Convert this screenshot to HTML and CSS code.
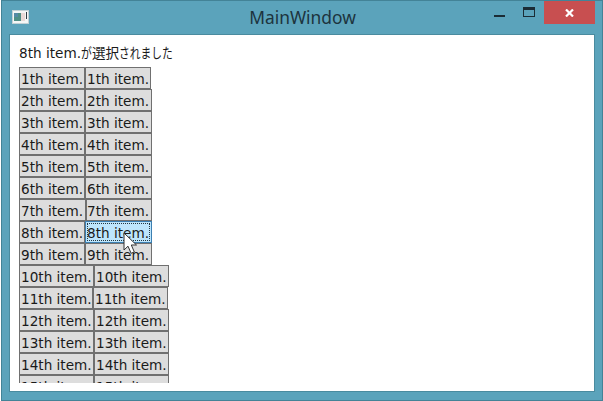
FILE: index.html
```html
<!DOCTYPE html>
<html lang="ja">
<head>
<meta charset="utf-8">
<title>MainWindow</title>
<link rel="stylesheet" href="styles.css">
</head>
<body>
<div class="window">
  <header class="titlebar">
    <svg class="app-icon" width="17" height="14" viewBox="0 0 17 14">
      <rect x=".5" y=".5" width="16" height="13" fill="#f4f6f6" stroke="#c3d0d4"/>
      <rect x="2" y="3" width="7" height="8" fill="#4f8f86"/>
      <path d="M2 3h4v4H2z" fill="#568aa5"/>
      <rect x="9" y="3" width="4" height="8" fill="#ead9d6"/>
      <rect x="14" y="2" width="1" height="7" fill="#303b43"/>
    </svg>
    <h1 class="title">MainWindow</h1>
    <div class="controls">
      <svg class="minimize" width="12" height="3" viewBox="0 0 12 3"><path d="M0 0h11v2H0z" fill="#1b2c35"/></svg>
      <svg class="maximize" width="12" height="10" viewBox="0 0 12 10"><path fill-rule="evenodd" d="M0 0h12v10H0zM1 3v6h10V3z" fill="#1b2c35"/></svg>
      <div class="close"><svg width="9" height="8" viewBox="0 0 9 8"><path d="M1 .5 8 7.5M8 .5 1 7.5" stroke="#fff" stroke-width="2.2"/></svg></div>
    </div>
  </header>
  <main class="client">
    <p class="message"><span class="latin">8th item.</span><span class="kana lead">が</span><span class="kanji">選択</span><span class="kana">されました</span></p>
    <div class="list">
      <div class="row first"><span class="cell">1th item.</span><span class="cell">1th item.</span></div>
      <div class="row"><span class="cell">2th item.</span><span class="cell">2th item.</span></div>
      <div class="row"><span class="cell">3th item.</span><span class="cell">3th item.</span></div>
      <div class="row"><span class="cell">4th item.</span><span class="cell">4th item.</span></div>
      <div class="row"><span class="cell">5th item.</span><span class="cell">5th item.</span></div>
      <div class="row"><span class="cell">6th item.</span><span class="cell">6th item.</span></div>
      <div class="row seventh"><span class="cell">7th item.</span><span class="cell">7th item.</span></div>
      <div class="row"><span class="cell">8th item.</span><span class="cell selected">8th item.</span></div>
      <div class="row"><span class="cell">9th item.</span><span class="cell">9th item.</span></div>
      <div class="row wide"><span class="cell">10th item.</span><span class="cell">10th item.</span></div>
      <div class="row wide eleventh"><span class="cell">11th item.</span><span class="cell">11th item.</span></div>
      <div class="row wide"><span class="cell">12th item.</span><span class="cell">12th item.</span></div>
      <div class="row wide"><span class="cell">13th item.</span><span class="cell">13th item.</span></div>
      <div class="row wide"><span class="cell">14th item.</span><span class="cell">14th item.</span></div>
      <div class="row wide"><span class="cell">15th item.</span><span class="cell">15th item.</span></div>
    </div>
  </main>
  <svg class="pointer" width="15" height="23" viewBox="0 0 15 23"><path d="M1 1v17l4-3.8 3.1 7.1 3.2-1.4-3-6.9H13.5z" fill="#fff" stroke="#333" stroke-width="1"/></svg>
</div>
</body>
</html>
```

FILE: styles.css
```css
* { box-sizing: border-box; }
body {
  margin: 0;
  background: #fff;
  overflow: hidden;
  font-family: "DejaVu Sans", "Noto Sans CJK JP", sans-serif;
  color: #1a1a1a;
}
.window {
  position: relative;
  width: 602px;
  height: 401px;
  margin-left: 1px;
  padding: 0 7px 8px;
  border: 1px solid #438397;
  background: #5ba3bb;
}
.titlebar {
  display: flex;
  height: 33px;
  padding-left: 3px;
}
.app-icon { margin-top: 9px; }
.title {
  flex: 1;
  margin: 0 0 0 82px;
  font-family: "Noto Sans", sans-serif;
  font-size: 17.4px;
  font-weight: 400;
  line-height: 33px;
  text-align: center;
  color: #1d343e;
}
.controls { display: flex; }
.minimize { margin: 14px 17px 0 0; }
.maximize { margin: 6px 9px 0 0; }
.close {
  display: flex;
  align-items: center;
  justify-content: center;
  width: 51px;
  height: 23px;
  background: #c84f50;
}
.client {
  height: 358px;
  padding: 8px 9px;
  border: 1px solid #4a8b9f;
  background: #fff;
  overflow: hidden;
}
.message {
  display: flex;
  height: 24px;
  margin: 0;
  font-size: 13.6px;
  line-height: 20px;
  white-space: nowrap;
}
.kana, .kanji {
  font-family: "Noto Sans CJK JP", sans-serif;
  font-size: 13.6px;
  line-height: 18px;
}
.kana {
  width: 53px;
  font-size: 14px;
  transform: scaleX(.77);
  transform-origin: left;
}
.lead { width: 11px; }
.list {
  height: 316px;
  overflow: hidden;
}
.row { display: flex; height: 22px; }
.cell {
  width: 67px;
  height: 22px;
  padding-left: 1px;
  border: 1px solid #707070;
  background: #ddd;
  font-size: 13.6px;
  line-height: 23px;
  white-space: nowrap;
}
.cell:first-child { width: 66px; }
.first .cell:last-child { width: 66px; }
.seventh .cell:first-child { width: 67px; }
.seventh .cell:last-child { width: 66px; padding-left: 0; }
.wide .cell, .wide .cell:first-child { width: 75px; }
.eleventh .cell:first-child { width: 74px; }
.selected {
  position: relative;
  border-color: #3c7fb1;
  background: #bee6fd;
}
.selected::after {
  content: "";
  position: absolute;
  inset: 1px;
  border: 1px dotted #243640;
}
.pointer {
  position: absolute;
  left: 121px;
  top: 231px;
}
```
